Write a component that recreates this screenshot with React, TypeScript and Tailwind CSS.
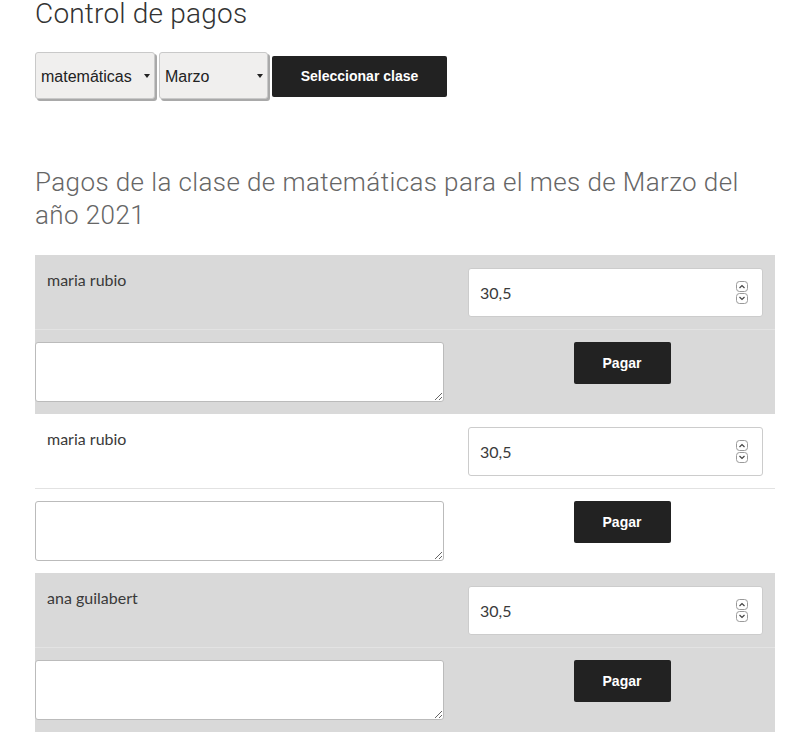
import React from "react";

const rows = [
  { name: "maria rubio", gray: true },
  { name: "maria rubio", gray: false },
  { name: "ana guilabert", gray: true },
];

function Spinner() {
  return (
    <svg width="14" height="26" viewBox="0 0 14 26" className="shrink-0">
      <rect x="1.5" y="1.5" width="11" height="10" rx="3" fill="none" stroke="#9a9a9a" strokeWidth="1" />
      <path d="M4.5 8 L7 5.5 L9.5 8" fill="none" stroke="#444" strokeWidth="1.2" />
      <rect x="1.5" y="13.5" width="11" height="10" rx="3" fill="none" stroke="#9a9a9a" strokeWidth="1" />
      <path d="M4.5 17 L7 19.5 L9.5 17" fill="none" stroke="#444" strokeWidth="1.2" />
    </svg>
  );
}

function Select({ label, width }: { label: string; width: string }) {
  return (
    <div
      className={`${width} h-[47px] flex items-center justify-between pl-[5px] pr-[4px] bg-[#f0efee] border border-[#c9c9c9] rounded-[3px] shadow-[2px_2px_0_#a9a9a9] text-[16px] text-[#222]`}
      style={{ fontFamily: '"Liberation Sans", Arial, sans-serif' }}
    >
      <span className="pt-[2px]">{label}</span>
      <svg width="6" height="4" viewBox="0 0 6 4">
        <path d="M0 0 L6 0 L3 4 Z" fill="#222" />
      </svg>
    </div>
  );
}

export default function App() {
  return (
    <div className="bg-white w-[800px] h-[735px] overflow-hidden px-[35px]" style={{ fontFamily: 'Lato, "Open Sans", sans-serif' }}>
      <h1
        className="text-[28px] leading-[28px] text-[#333] font-light tracking-[0.2px]"
        style={{ fontFamily: 'Roboto, "Open Sans", sans-serif' }}
      >
        Control de pagos
      </h1>
      <div className="flex items-center gap-[4px] mt-[24px] h-[47px]">
        <Select label="matemáticas" width="w-[120px]" />
        <Select label="Marzo" width="w-[109px]" />
        <button
          className="w-[175px] h-[41px] mt-[2px] bg-[#222] text-white rounded-[2px] text-[14px] font-bold"
          style={{ fontFamily: '"Liberation Sans", Arial, sans-serif' }}
        >
          Seleccionar clase
        </button>
      </div>
      <h2
        className="mt-[67px] text-[26px] leading-[33px] text-[#666] font-light tracking-[0.4px]"
        style={{ fontFamily: 'Roboto, "Open Sans", sans-serif' }}
      >
        Pagos de la clase de matemáticas para el mes de Marzo del año 2021
      </h2>
      <div className="mt-[23px] w-[740px]">
        {rows.map((r, i) => (
          <div key={i} className={r.gray ? "bg-[#d9d9d9]" : "bg-white"}>
            <div className={`flex h-[75px] border-b ${r.gray ? "border-[#e3e3e3]" : "border-[#e2e2e2]"}`}>
              <div className="w-[433px] pl-[12px] pt-[15px] text-[16px] leading-[20px] text-[#3a3a3a]">{r.name}</div>
              <div className="pt-[13px]">
                <div className="w-[295px] h-[49px] bg-white border border-[#ccc] rounded-[3px] flex items-center pl-[11px] pr-[13px] justify-between text-[16px] text-[#3a3a3a]">
                  <span>30,5</span>
                  <Spinner />
                </div>
              </div>
            </div>
            <div className="flex h-[84px] pt-[12px]">
              <textarea
                className="w-[409px] h-[60px] bg-white border border-[#bbb] rounded-[3px] outline-none"
                readOnly
              />
              <div className="flex-1 flex justify-center pl-[25px]">
                <button
                  className="w-[97px] h-[42px] bg-[#222] text-white rounded-[2px] text-[14px] font-bold"
                  style={{ fontFamily: '"Liberation Sans", Arial, sans-serif' }}
                >
                  Pagar
                </button>
              </div>
            </div>
          </div>
        ))}
      </div>
    </div>
  );
}
